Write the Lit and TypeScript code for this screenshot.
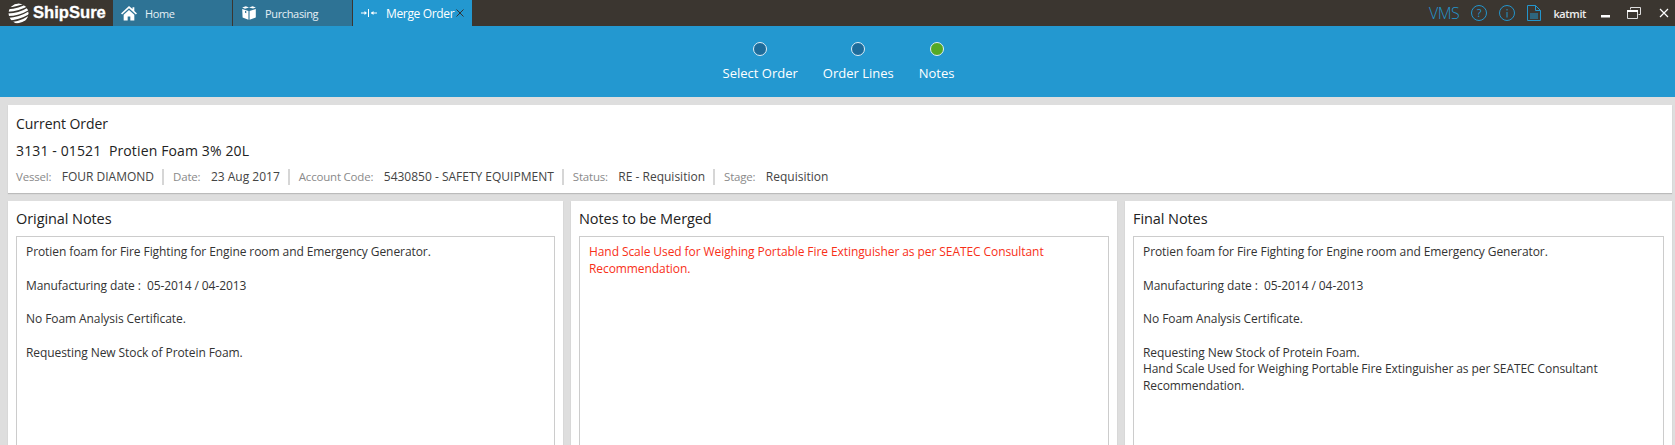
import { LitElement, html, css, svg } from "lit";
import { customElement } from "lit/decorators.js";

const FONT = css`"Open Sans", "Noto Sans", sans-serif`;

const notesA = [
  "Protien foam for Fire Fighting for Engine room and Emergency Generator.",
  "",
  "Manufacturing date :  05-2014 / 04-2013",
  "",
  "No Foam Analysis Certificate.",
  "",
  "Requesting New Stock of Protein Foam.",
];
const merge = "Hand Scale Used for Weighing Portable Fire Extinguisher as per SEATEC Consultant Recommendation.";

@customElement("app-root")
export class AppRoot extends LitElement {
  static styles = css`
    :host { display: block; width: 1675px; height: 445px; overflow: hidden; background: #dedede; font-family: ${FONT}; }
    .top { display: flex; height: 26px; background: #3b3630; color: #fff; }
    .logo { width: 113px; display: flex; align-items: center; padding-left: 8px; box-sizing: border-box; gap: 4px; }
    .logo b { font: 700 16.6px "Liberation Sans", sans-serif; -webkit-text-stroke: 0.3px #fff; }
    .tab { width: 119px; margin-right: 1px; background: #2e7395; display: flex; align-items: center; font-size: 11px; letter-spacing: -0.35px; color: #e6f0f5; box-sizing: border-box; padding-left: 8px; gap: 8px; position: relative; }
    .tab.on { background: #2398d0; color: #fff; font-size: 12px; letter-spacing: -0.35px; gap: 9px; }
    .tab svg { flex: none; }
    .close { position: absolute; left: 103px; top: 9px; }
    .right { margin-left: auto; display: flex; align-items: center; }
    .vms { color: #2395cc; font-size: 16px; letter-spacing: -0.4px; font-weight: 300; margin-right: 11px; }
    .q { margin-right: 10px; } .i { margin-right: 11px; }
    .user { font-size: 11px; font-weight: 600; color: #eee; margin: 0 14px 0 12px; letter-spacing: -0.4px; }
    .rest { margin-left: 15px; }
    .x { margin: 0 6px 0 18px; }
    .steps { height: 71px; background: #2398d0; display: flex; justify-content: center; color: #fff; font-size: 13px; gap: 25px; padding-left: 2px; box-sizing: border-box; }
    .step { display: flex; flex-direction: column; align-items: center; padding-top: 16px; }
    .dot { width: 12px; height: 12px; border: 1.5px solid #dfeef6; border-radius: 50%; background: #1d6c9b; }
    .dot.g { background: #55a925; }
    .step span { margin-top: 8px; line-height: 18px; }
    .main { padding: 8px 3px 8px 8px; display: flex; flex-direction: column; gap: 8px; }
    .card { background: #fff; box-shadow: 0 1px 1px #bbb; }
    .cur { height: 88px; padding: 9px 8px 0; box-sizing: border-box; color: #222; }
    .h { font-size: 14.5px; letter-spacing: -0.08px; line-height: 20px; color: #222; }
    .co { font-size: 14px; letter-spacing: -0.05px; }
    .title { margin-top: 7px; font-size: 14px; letter-spacing: 0.13px; }
    .meta { display: flex; font-size: 12px; color: #444; margin-top: 8px; line-height: 16px; }
    .meta i { font-style: normal; font-size: 11.5px; letter-spacing: -0.2px; color: #8a8a8a; margin-right: 10.5px; }
    .meta .m { padding-right: 8px; margin-right: 9px; border-right: 2px solid #d6d6d6; }
    .meta .m:last-child { border: 0; }
    .cols { display: flex; gap: 8px; }
    .panel { height: 260px; padding: 8px 8px 0; box-sizing: border-box; }
    .p1 { width: 555px; } .p2 { width: 546px; } .p3 { flex: 1; }
    .box { margin-top: 7px; height: 240px; border: 1px solid #ccc; padding: 7px 9px; box-sizing: border-box; font-size: 12px; line-height: 16.75px; letter-spacing: -0.08px; color: #333; white-space: pre-wrap; }
    .box.red { color: #f83018; }
  `;

  private home() {
    return html`<svg width="16" height="18" viewBox="0 0 18 20"><path fill="#fff" d="M9 2 0 10.5l1.3 1.2L9 4.6l7.7 7.1 1.3-1.2-3-2.8V3.5h-2v2.1zM3 12v6.5h4.5v-4.5h3v4.5H15V12L9 6.5z"/></svg>`;
  }
  private box() {
    return html`<svg width="16" height="18" viewBox="0 0 20 20"><path fill="#fff" d="M6 1.5 10 3l4.5-1.5 4 1.5-3.5 1.5L10 3 5 4.8 1.5 3.2zM1.5 5l7.8 2.6V18.5L2 15.5zM18.5 5v10.5l-7.8 3V7.6zM5 7.2v2.6l1.6.5V7.7z"/></svg>`;
  }
  render() {
    const meta = [["Vessel:", "FOUR DIAMOND"], ["Date:", "23 Aug 2017"], ["Account Code:", "5430850 - SAFETY EQUIPMENT"], ["Status:", "RE - Requisition"], ["Stage:", "Requisition"]];
    return html`
      <div class="top">
        <div class="logo">
          <svg width="21" height="21" viewBox="0 0 21 21"><defs><clipPath id="g"><circle cx="10.5" cy="10.5" r="10"/></clipPath></defs><g clip-path="url(#g)" fill="none" stroke="#fff" stroke-width="2.5">${[-1, 3.4, 7.8, 12.2, 16.6, 21].map((y) => svg`<path d="M-1 ${y + 4}Q11 ${y + 4} 22 ${y - 3}"/>`)}</g></svg>
          <b>ShipSure</b>
        </div>
        <div class="tab">${this.home()}<span>Home</span></div>
        <div class="tab">${this.box()}<span>Purchasing</span></div>
        <div class="tab on">
          <svg width="16" height="8" viewBox="0 0 16 8"><path stroke="#fff" fill="#fff" d="M0 4h5M7.5 0v8M10 4h6"/><path fill="#fff" d="M6 4 3.5 2v4zM10 4l2.5-2v4z"/></svg>
          <span>Merge Order</span>
          <svg class="close" width="8" height="8" viewBox="0 0 8 8"><path stroke="#333" d="M.5.5l7 7M7.5.5l-7 7"/></svg>
        </div>
        <div class="right">
          <span class="vms">VMS</span>
          <svg class="q" width="18" height="18" viewBox="0 0 18 18"><circle cx="9" cy="9" r="7.5" fill="none" stroke="#2395cc"/><text x="9" y="13" text-anchor="middle" font-size="11" fill="#2395cc" font-family="Open Sans">?</text></svg>
          <svg class="i" width="18" height="18" viewBox="0 0 18 18"><circle cx="9" cy="9" r="7.5" fill="none" stroke="#2395cc"/><path stroke="#2395cc" d="M9 8v5.5M9 5v1.5"/></svg>
          <svg width="14" height="16" viewBox="0 0 14 16"><path fill="none" stroke="#2395cc" d="M.5.5h8l5 5v10H.5zM8.5.5v5h5M3 9h8M3 11h8M3 13h8"/></svg>
          <span class="user">katmit</span>
          <svg width="12" height="12" viewBox="0 0 12 12"><path fill="#fff" d="M1 8h9v2.5H1z"/></svg>
          <svg class="rest" width="14" height="12" viewBox="0 0 14 12"><path fill="none" stroke="#ddd" d="M3.5 2.5v-2h10v7h-2M.5 3.5h10v8H.5z"/><path fill="#fff" d="M0 3h11v2H0z"/></svg>
          <svg class="x" width="10" height="10" viewBox="0 0 10 10"><path stroke="#fff" stroke-width="1.2" d="M1 1l8 8M9 1 1 9"/></svg>
        </div>
      </div>
      <div class="steps">
        <div class="step"><div class="dot"></div><span>Select Order</span></div>
        <div class="step"><div class="dot"></div><span>Order Lines</span></div>
        <div class="step"><div class="dot g"></div><span>Notes</span></div>
      </div>
      <div class="main">
        <div class="card cur">
          <div class="h co">Current Order</div>
          <div class="h title">3131 - 01521&nbsp; Protien Foam 3% 20L</div>
          <div class="meta">${meta.map(([k, v]) => html`<div class="m"><i>${k}</i>${v}</div>`)}</div>
        </div>
        <div class="cols">
          <div class="card panel p1"><div class="h">Original Notes</div><div class="box">${notesA.join("\n")}</div></div>
          <div class="card panel p2"><div class="h">Notes to be Merged</div><div class="box red">${merge}</div></div>
          <div class="card panel p3"><div class="h">Final Notes</div><div class="box">${notesA.join("\n") + "\n" + merge}</div></div>
        </div>
      </div>
    `;
  }
}
